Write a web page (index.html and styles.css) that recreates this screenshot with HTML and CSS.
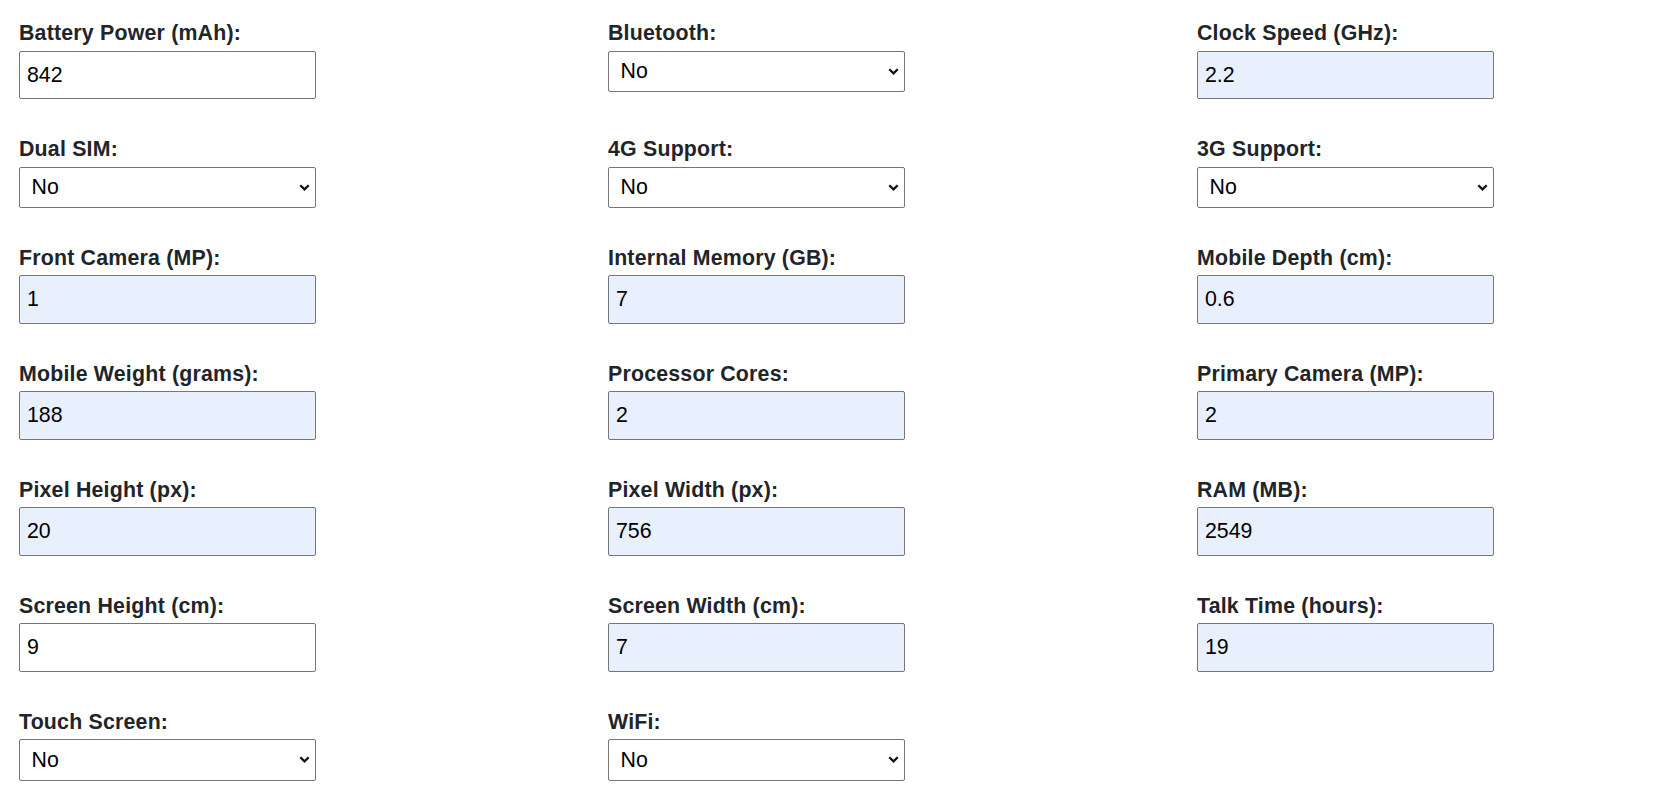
FILE: index.html
```html
<!DOCTYPE html>
<html lang="en">
<head>
<meta charset="utf-8">
<title>Mobile Specs</title>
<link rel="stylesheet" href="styles.css">
</head>
<body>
<form class="spec-form">
  <div class="field"><label class="field-label">Battery Power (mAh):</label><input class="text-input" type="text" value="842"></div>
  <div class="field"><label class="field-label">Bluetooth:</label><div class="select-wrap"><select class="select-input"><option>No</option><option>Yes</option></select><svg class="chevron" viewBox="0 0 11 7" width="11" height="7"><path d="M1.3 1.3 L5.5 5.4 L9.7 1.3" fill="none" stroke="#111" stroke-width="2.3"/></svg></div></div>
  <div class="field"><label class="field-label">Clock Speed (GHz):</label><input class="text-input filled" type="text" value="2.2"></div>

  <div class="field"><label class="field-label">Dual SIM:</label><div class="select-wrap"><select class="select-input"><option>No</option><option>Yes</option></select><svg class="chevron" viewBox="0 0 11 7" width="11" height="7"><path d="M1.3 1.3 L5.5 5.4 L9.7 1.3" fill="none" stroke="#111" stroke-width="2.3"/></svg></div></div>
  <div class="field"><label class="field-label">4G Support:</label><div class="select-wrap"><select class="select-input"><option>No</option><option>Yes</option></select><svg class="chevron" viewBox="0 0 11 7" width="11" height="7"><path d="M1.3 1.3 L5.5 5.4 L9.7 1.3" fill="none" stroke="#111" stroke-width="2.3"/></svg></div></div>
  <div class="field"><label class="field-label">3G Support:</label><div class="select-wrap"><select class="select-input"><option>No</option><option>Yes</option></select><svg class="chevron" viewBox="0 0 11 7" width="11" height="7"><path d="M1.3 1.3 L5.5 5.4 L9.7 1.3" fill="none" stroke="#111" stroke-width="2.3"/></svg></div></div>

  <div class="field"><label class="field-label">Front Camera (MP):</label><input class="text-input filled" type="text" value="1"></div>
  <div class="field"><label class="field-label">Internal Memory (GB):</label><input class="text-input filled" type="text" value="7"></div>
  <div class="field"><label class="field-label">Mobile Depth (cm):</label><input class="text-input filled" type="text" value="0.6"></div>

  <div class="field"><label class="field-label">Mobile Weight (grams):</label><input class="text-input filled" type="text" value="188"></div>
  <div class="field"><label class="field-label">Processor Cores:</label><input class="text-input filled" type="text" value="2"></div>
  <div class="field"><label class="field-label">Primary Camera (MP):</label><input class="text-input filled" type="text" value="2"></div>

  <div class="field"><label class="field-label">Pixel Height (px):</label><input class="text-input filled" type="text" value="20"></div>
  <div class="field"><label class="field-label">Pixel Width (px):</label><input class="text-input filled" type="text" value="756"></div>
  <div class="field"><label class="field-label">RAM (MB):</label><input class="text-input filled" type="text" value="2549"></div>

  <div class="field"><label class="field-label">Screen Height (cm):</label><input class="text-input" type="text" value="9"></div>
  <div class="field"><label class="field-label">Screen Width (cm):</label><input class="text-input filled" type="text" value="7"></div>
  <div class="field"><label class="field-label">Talk Time (hours):</label><input class="text-input filled" type="text" value="19"></div>

  <div class="field"><label class="field-label">Touch Screen:</label><div class="select-wrap"><select class="select-input"><option>No</option><option>Yes</option></select><svg class="chevron" viewBox="0 0 11 7" width="11" height="7"><path d="M1.3 1.3 L5.5 5.4 L9.7 1.3" fill="none" stroke="#111" stroke-width="2.3"/></svg></div></div>
  <div class="field"><label class="field-label">WiFi:</label><div class="select-wrap"><select class="select-input"><option>No</option><option>Yes</option></select><svg class="chevron" viewBox="0 0 11 7" width="11" height="7"><path d="M1.3 1.3 L5.5 5.4 L9.7 1.3" fill="none" stroke="#111" stroke-width="2.3"/></svg></div></div>
</form>
</body>
</html>
```
FILE: styles.css
```css
html, body {
  margin: 0;
  padding: 0;
  background: #ffffff;
  overflow: hidden;
}

body {
  font-family: "Liberation Sans", Arial, sans-serif;
  color: #212529;
}

.spec-form {
  display: grid;
  grid-template-columns: 589px 589px 1fr;
  row-gap: 37.5px;
  padding: 21px 0 0 19px;
}

.field {
  display: flex;
  flex-direction: column;
  align-items: flex-start;
}

.field-label {
  font-weight: bold;
  font-size: 21.33px;
  line-height: 24.5px;
  letter-spacing: 0.2px;
  margin-bottom: 5.33px;
  color: #212529;
}

.text-input {
  box-sizing: border-box;
  width: 297px;
  height: 48.67px;
  margin: 0;
  padding: 0 7px;
  border: 1px solid #767676;
  border-radius: 2px;
  background: #ffffff;
  font-family: "Liberation Sans", Arial, sans-serif;
  font-size: 21.33px;
  color: #000000;
  outline: none;
}

.text-input.filled {
  background: #e8f0fe;
}

.select-wrap {
  position: relative;
  width: 297px;
}

.select-input {
  -webkit-appearance: none;
  appearance: none;
  box-sizing: border-box;
  width: 297px;
  height: 41.33px;
  margin: 0;
  padding: 0 30px 0 11.5px;
  border: 1px solid #767676;
  border-radius: 2px;
  background: #ffffff;
  font-family: "Liberation Sans", Arial, sans-serif;
  font-size: 21.33px;
  color: #000000;
  outline: none;
}

.chevron {
  position: absolute;
  right: 6px;
  top: 17px;
  pointer-events: none;
}
```
